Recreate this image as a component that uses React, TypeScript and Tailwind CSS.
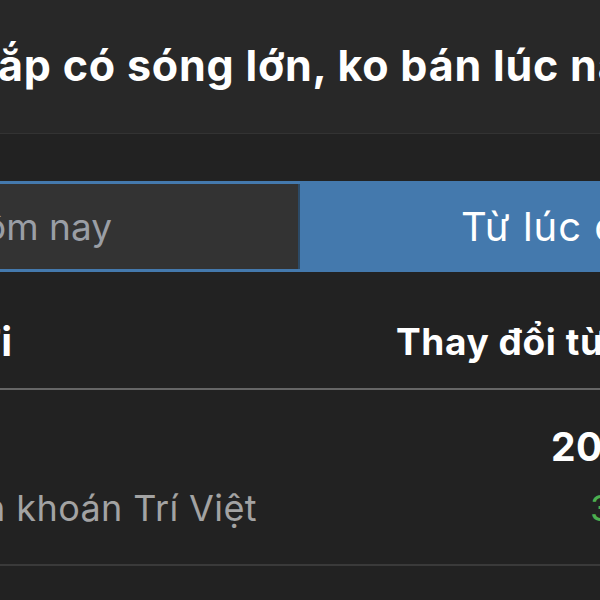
import React from "react";

const font = { fontFamily: "Inter, Roboto, 'Noto Sans', sans-serif" };

function Header() {
  return (
    <div className="h-[134px] bg-[#282828] border-b border-[#333333] pt-[40px]">
      <div className="ml-[-2px] whitespace-nowrap text-[43px] font-bold leading-[50px] tracking-[0.8px] text-white">
        ắp có sóng lớn, ko bán lúc nào
      </div>
    </div>
  );
}

function Segments() {
  return (
    <div className="mt-[47px] flex h-[91px] bg-[#4479ad] py-[3px]">
      <div className="flex w-[300px] flex-none items-center border-r-2 border-[#2c4a66] bg-[#333333]">
        <div className="flex w-[112px] justify-end overflow-hidden">
          <span className="whitespace-nowrap text-[37px] leading-[44px] text-[#9a9ea5]">Hôm nay</span>
        </div>
      </div>
      <div className="flex flex-1 items-center overflow-hidden">
        <span className="ml-[161px] whitespace-nowrap text-[40px] leading-[44px] tracking-[1px] text-white">Từ lúc đầu</span>
      </div>
    </div>
  );
}

function TableHead() {
  return (
    <div className="flex h-[118px] border-b-2 border-[#666666] pt-[48px]">
      <div className="w-[396px] flex-none">
        <div className="flex w-[13px] justify-end overflow-hidden">
          <span className="whitespace-nowrap text-[40px] font-bold leading-[44px] tracking-[1px] text-white">Mã chứng khoán mới</span>
        </div>
      </div>
      <span className="whitespace-nowrap text-[37px] font-bold leading-[44px] tracking-[0.6px] text-white">Thay đổi từ đầu</span>
    </div>
  );
}

function Row() {
  return (
    <div className="h-[176px] border-b-2 border-[#3a3a3a] pt-[35px]">
      <div className="flex">
        <span className="ml-[551px] whitespace-nowrap text-[39px] font-bold leading-[44px] tracking-[0.5px] text-white">20.300</span>
      </div>
      <div className="mt-[17px] flex">
        <div className="w-[590px] flex-none">
          <div className="flex w-[257px] justify-end overflow-hidden">
            <span className="whitespace-nowrap text-[36px] leading-[44px] tracking-[0.4px] text-[#a3a3a3]">Công ty Chứn khoán Trí Việt</span>
          </div>
        </div>
        <span className="whitespace-nowrap text-[36px] leading-[44px] text-[#4caf50]">3,57%</span>
      </div>
    </div>
  );
}

export default function App() {
  return (
    <div style={font} className="h-[600px] w-[600px] overflow-hidden bg-[#222222]">
      <Header />
      <Segments />
      <TableHead />
      <Row />
    </div>
  );
}
